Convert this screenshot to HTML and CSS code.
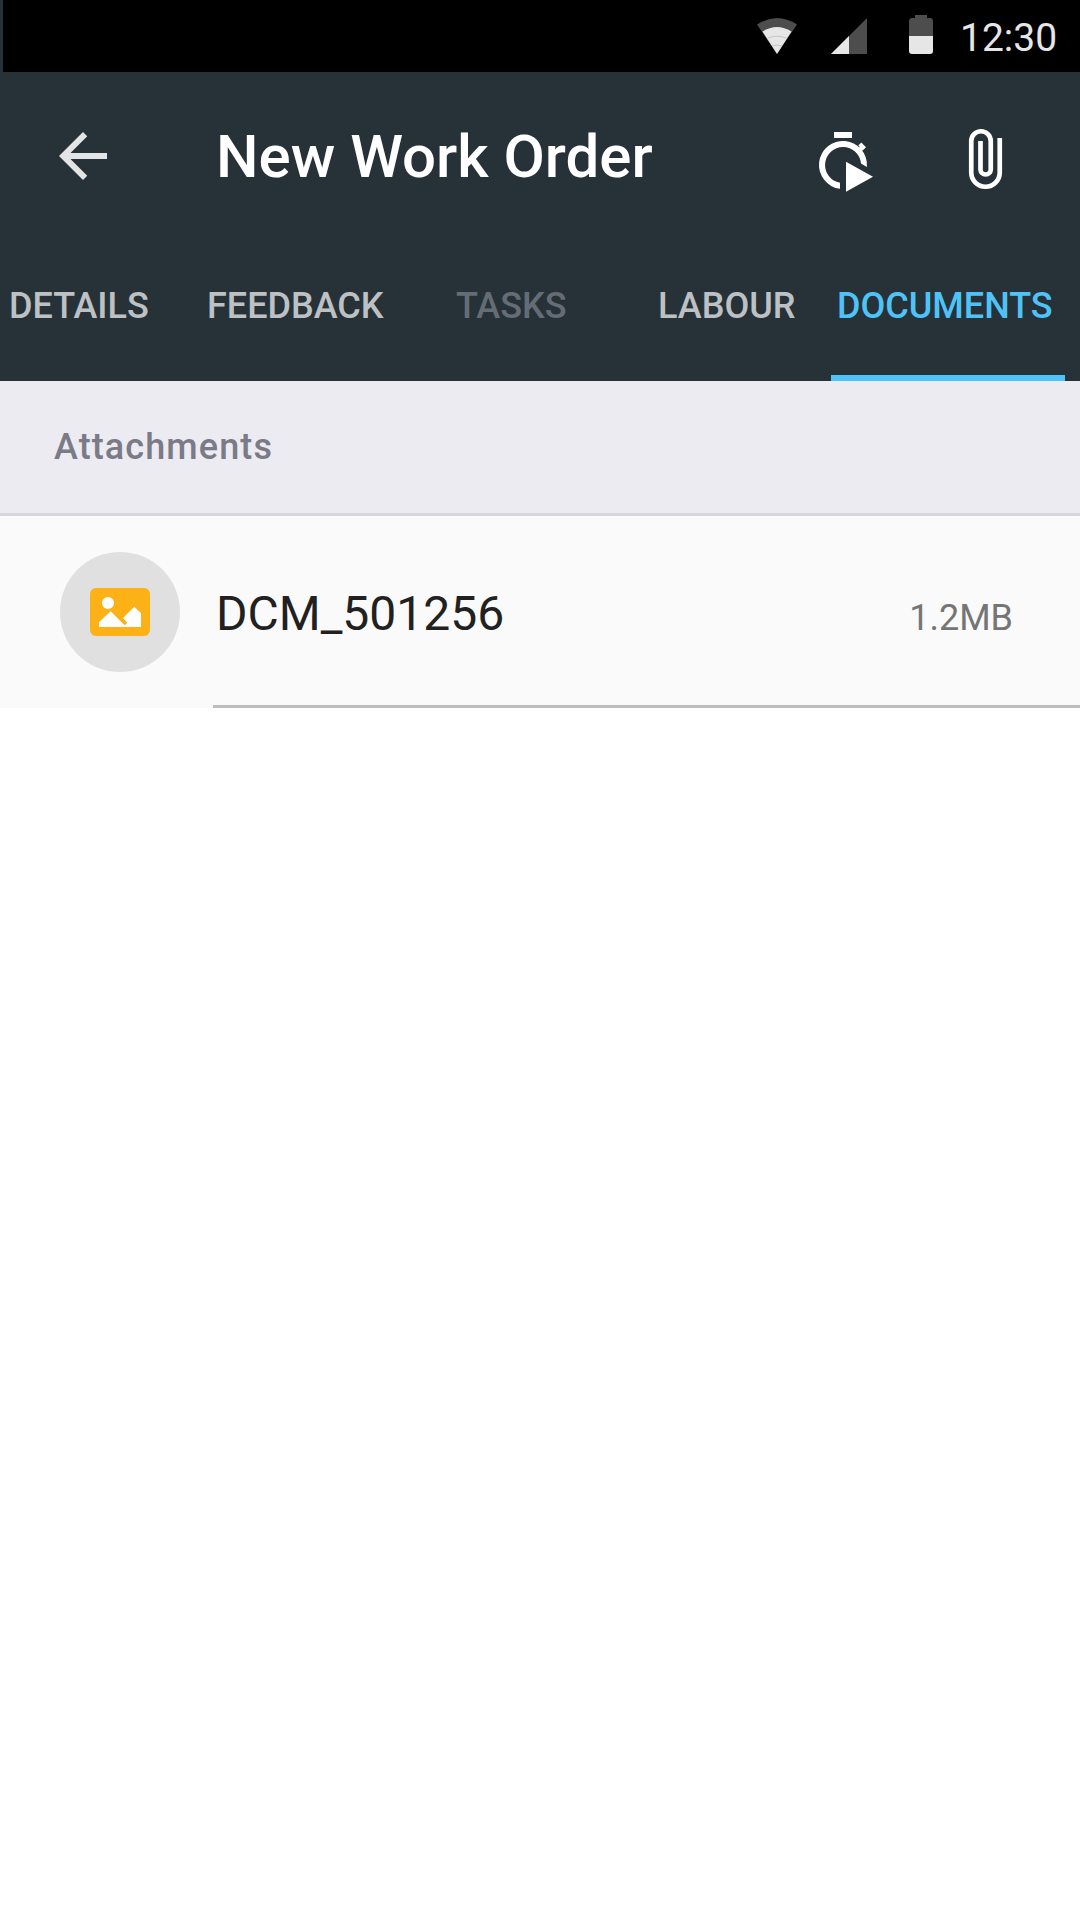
FILE: index.html
```html
<!DOCTYPE html>
<html lang="en">
<head>
<meta charset="utf-8">
<title>New Work Order</title>
<link rel="stylesheet" href="styles.css">
</head>
<body>
<div class="status-bar">
  <svg class="status-icons" width="186" height="72" viewBox="0 0 186 72">
    <path fill="#4d4d4d" d="M7 24.500Q27 11.500 47 24.500L27 54Z"/>
    <path fill="#e6e6e6" d="M12.500 31.500Q27 22.500 41.500 31.500L27 54Z"/>
    <path fill="none" stroke="#bdbdbd" stroke-width=".8" d="M17.500 38Q27 34.500 36.500 38M22 46Q27 44 32 46"/>
    <path fill="#4d4d4d" d="M117 18V54H81Z"/>
    <path fill="#e6e6e6" d="M99 36V54H81Z"/>
    <path fill="#4d4d4d" d="M165 15h12v3h3q3 0 3 3v15h-24V21q0-3 3-3h3Z"/>
    <path fill="#e6e6e6" d="M159 36h24v15q0 3-3 3h-18q-3 0-3-3Z"/>
  </svg>
  <span class="clock">12:30</span>
</div>
<header class="app-header">
  <div class="toolbar">
    <svg class="back" width="72" height="72" viewBox="0 0 24 24"><path fill="#e3e4e5" d="M20 11H7.830l5.590-5.590L12 4l-8 8 8 8 1.410-1.410L7.830 13H20v-2z"/></svg>
    <h1 class="title">New Work Order</h1>
    <svg class="timer" width="72" height="72" viewBox="0 0 72 72" fill="#fff">
      <path d="M27 6h18v6H27Z"/>
      <path d="M33 62.800A24 24 0 1 1 59.900 41L54 37.500A18 18 0 1 0 33 56.800Z"/>
      <path d="M39 35.700L66 50.700 39 65.700Z"/>
      <path fill="none" stroke="#fff" stroke-width="4.300" d="M50 27L56 20.500M52.800 18L57.500 22.700"/>
    </svg>
    <svg class="clip" width="72" height="72" viewBox="0 0 72 72"><path fill="none" stroke="#fff" stroke-width="4.700" d="M49.750 15V49.500a14.250 14.250 0 0 1-28.500 0V18a9.750 9.750 0 0 1 19.500 0V46.600a5.130 5.130 0 0 1-10.250 0V18"/></svg>
  </div>
  <nav class="tabs">
    <a class="tab details">DETAILS</a>
    <a class="tab feedback">FEEDBACK</a>
    <a class="tab tasks">TASKS</a>
    <a class="tab labour">LABOUR</a>
    <a class="tab documents">DOCUMENTS</a>
  </nav>
</header>
<main>
  <h2 class="section">Attachments</h2>
  <div class="row">
    <div class="avatar">
      <svg width="60" height="48" viewBox="0 0 60 48">
        <rect width="60" height="48" rx="6" fill="#fcb216"/>
        <g fill="#fff"><circle cx="18" cy="15" r="6"/><path d="M9 39V34.300L20.600 23.300 34.700 37.300 37.300 34.700 33 30 44.300 18.700 51 25.300V39Z"/></g>
      </svg>
    </div>
    <div class="row-body">
      <span class="name">DCM_501256</span>
      <span class="size">1.2MB</span>
    </div>
  </div>
</main>
</body>
</html>
```
FILE: styles.css
```css
* { box-sizing: border-box; }
body { margin: 0; width: 1080px; height: 1920px; background: #fff; font-family: Roboto, sans-serif; overflow: hidden; }
svg { display: block; flex: none; }
.status-bar { height: 72px; background: #000; border-left: 3px solid #263238; display: flex; padding-left: 747px; }
.clock { margin-left: 24px; padding-top: 15px; font-size: 39px; line-height: 46px; color: #e6e6e6; white-space: nowrap; }
.app-header { height: 309px; background: #273238; }
.toolbar { height: 183px; display: flex; align-items: flex-start; }
.back { margin: 48px 0 0 47px; }
.title { margin: 50px 0 0 97px; width: 591px; font-size: 60px; line-height: 70px; font-weight: 500; color: #fff; white-space: nowrap; }
.timer { margin-top: 54px; }
.clip { margin: 51px 0 0 71px; }
.tabs { height: 126px; display: flex; color: #bec1c4; }
.tab { font-size: 36px; font-weight: 500; line-height: 42px; padding-top: 30px; white-space: nowrap; }
.details { margin-left: 9px; width: 198px; }
.feedback { width: 249px; }
.tasks { width: 202px; color: #656c76; }
.labour { width: 173px; }
.documents { width: 234px; padding-left: 6px; color: #4fc3f7; border-bottom: 6px solid #4fc3f7; }
.section { margin: 0; height: 135px; padding: 45px 54px 0; background: #ecebf1; border-bottom: 3px solid #d8d6dd; color: #7b7a87; font-size: 36px; line-height: 42px; font-weight: 500; letter-spacing: 1.1px; }
.row { height: 192px; display: flex; background: #fafafa; padding-left: 60px; }
.avatar { width: 120px; height: 120px; margin-top: 36px; border-radius: 50%; background: #e0e0e0; display: flex; align-items: center; justify-content: center; }
.row-body { flex: 1; margin-left: 33px; border-bottom: 3px solid #bdbdbd; display: flex; justify-content: space-between; align-items: baseline; padding: 70px 67px 0 3px; }
.name { font-size: 48px; line-height: 56px; color: #212121; }
.size { font-size: 36px; line-height: 42px; color: #757575; }
```
